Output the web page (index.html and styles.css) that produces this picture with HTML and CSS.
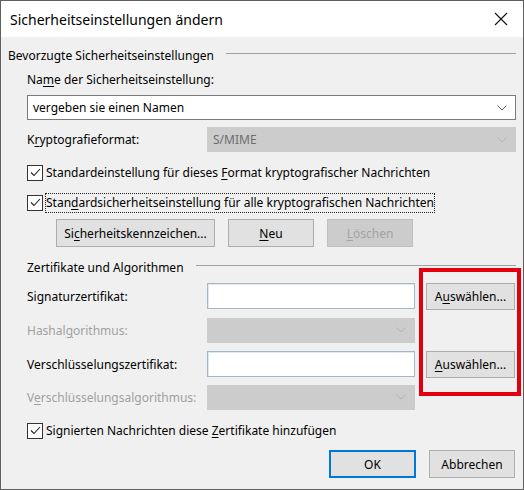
FILE: index.html
```html
<!DOCTYPE html>
<html lang="de">
<head>
    <meta charset="UTF-8">
    <title>Sicherheitseinstellungen ändern</title>
    <link rel="stylesheet" href="styles.css">
</head>
<body>

<div class="dialog">
    <div class="titlebar">
        <span class="title">Sicherheitseinstellungen ändern</span>
        <svg class="close" width="14" height="14" viewBox="0 0 14 14">
            <path d="M1 1 L13 13 M13 1 L1 13" stroke="#111" stroke-width="1.1" fill="none"/>
        </svg>
    </div>

    <div class="content">
        <!-- preferred settings -->
        <div class="group-head head-prefs">
            <span>Bevorzugte Sicherheitseinstellungen</span>
            <i class="rule"></i>
        </div>

        <div class="indent">
            <div class="field-label name-label">Na<u>m</u>e der Sicherheitseinstellung:</div>
            <div class="combo name-combo">
                <span>vergeben sie einen Namen</span>
                <svg class="chevron" width="10" height="6" viewBox="0 0 10 6"><path d="M0.5 0.5 L5 5 L9.5 0.5" stroke="#5c5c5c" fill="none"/></svg>
            </div>

            <div class="form-row format-row">
                <span class="row-label">K<u>r</u>yptografieformat:</span>
                <div class="combo disabled wide">
                    <span>S/MIME</span>
                    <svg class="chevron" width="10" height="6" viewBox="0 0 10 6"><path d="M0.5 0.5 L5 5 L9.5 0.5" stroke="#b4b4b4" fill="none"/></svg>
                </div>
            </div>

            <label class="check check-format">
                <span class="box"><svg width="13" height="13" viewBox="0 0 13 13"><path d="M2 6.5 L5 9.5 L11 3" stroke="#222" stroke-width="1.1" fill="none"/></svg></span>
                <span>Standardeinstellung für dieses <u>F</u>ormat kryptografischer Nachrichten</span>
            </label>

            <label class="check check-default">
                <span class="box"><svg width="13" height="13" viewBox="0 0 13 13"><path d="M2 6.5 L5 9.5 L11 3" stroke="#222" stroke-width="1.1" fill="none"/></svg></span>
                <span class="focused">Stan<u>d</u>ardsicherheitseinstellung für alle kryptografischen Nachrichten</span>
            </label>

            <div class="button-row">
                <button class="btn btn-labels">Si<u>c</u>herheitskennzeichen...</button>
                <button class="btn btn-new"><u>N</u>eu</button>
                <button class="btn btn-delete" disabled><u>L</u>öschen</button>
            </div>
        </div>

        <!-- certificates and algorithms -->
        <div class="group-head head-certs">
            <span>Zertifikate und Algorithmen</span>
            <i class="rule"></i>
        </div>

        <div class="indent">
            <div class="form-row cert-row sign-row">
                <span class="row-label">Signaturzertifikat:</span>
                <div class="textbox"></div>
                <button class="btn btn-pick">A<u>u</u>swählen...</button>
            </div>

            <div class="form-row cert-row hash-row">
                <span class="row-label muted">Hashal<u>g</u>orithmus:</span>
                <div class="combo disabled narrow">
                    <span></span>
                    <svg class="chevron" width="10" height="6" viewBox="0 0 10 6"><path d="M0.5 0.5 L5 5 L9.5 0.5" stroke="#b4b4b4" fill="none"/></svg>
                </div>
            </div>

            <div class="form-row cert-row crypt-row">
                <span class="row-label">Verschlüsselungszertifikat:</span>
                <div class="textbox"></div>
                <button class="btn btn-pick"><u>A</u>uswählen...</button>
            </div>

            <div class="form-row cert-row algo-row">
                <span class="row-label muted">V<u>e</u>rschlüsselungsalgorithmus:</span>
                <div class="combo disabled narrow">
                    <span></span>
                    <svg class="chevron" width="10" height="6" viewBox="0 0 10 6"><path d="M0.5 0.5 L5 5 L9.5 0.5" stroke="#b4b4b4" fill="none"/></svg>
                </div>
            </div>

            <label class="check check-attach">
                <span class="box"><svg width="13" height="13" viewBox="0 0 13 13"><path d="M2 6.5 L5 9.5 L11 3" stroke="#222" stroke-width="1.1" fill="none"/></svg></span>
                <span>Signierten Nachrichten diese <u>Z</u>ertifikate hinzufügen</span>
            </label>
        </div>

        <div class="footer">
            <button class="btn btn-ok">OK</button>
            <button class="btn btn-cancel">Abbrechen</button>
        </div>
    </div>

    <!-- red marker around the two pick buttons -->
    <div class="marker"></div>
</div>

</body>
</html>
```

FILE: styles.css
```css
* {
    box-sizing: border-box;
}
body {
    margin: 0;
    font-family: 'Noto Sans', 'Open Sans', sans-serif;
    font-size: 12px;
    color: #000;
}
.dialog {
    position: relative;
    width: 524px;
    height: 490px;
    border: 1px solid #5f5f5f;
    background-color: #f0f0f0;
    overflow: hidden;
}
.titlebar {
    height: 36px;
    background-color: #fff;
    display: flex;
    align-items: center;
    justify-content: space-between;
    padding: 0 15px 0 9px;
}
.title {
    font-size: 14px;
}
.close {
    display: block;
}
.content {
    padding: 0 7px 0 7px;
}
u {
    text-decoration-thickness: 1px;
    text-underline-offset: 2px;
}

/* group headers with the thin rule */
.group-head {
    display: flex;
    align-items: center;
    height: 16px;
    line-height: 16px;
}
.group-head .rule {
    flex: 1;
    height: 1px;
    background-color: #a0a0a0;
    margin: 0 0 6px 12px;
}
.head-prefs {
    margin-top: 11px;
}
.head-certs {
    margin-top: 13px;
    padding-left: 19px;
}
.indent {
    padding-left: 19px;
}

.field-label {
    height: 16px;
    line-height: 16px;
}
.name-label {
    margin-top: 8px;
}

/* combo boxes */
.combo {
    display: flex;
    align-items: center;
    justify-content: space-between;
    height: 25px;
    padding: 0 8px 0 5px;
    background-color: #fff;
    border: 1px solid #7a7a7a;
}
.combo.disabled {
    background-color: #cccccc;
    border-color: #cccccc;
    color: #6d6d6d;
}
.name-combo {
    margin-top: 7px;
}
.combo.wide {
    width: 309px;
}
.combo.narrow {
    width: 208px;
}

.form-row {
    display: flex;
    align-items: center;
}
.row-label {
    width: 180px;
    flex: none;
}
.row-label.muted {
    color: #a0a0a0;
}
.format-row {
    margin-top: 7px;
}

/* checkboxes */
.check {
    display: flex;
    align-items: center;
    height: 19px;
}
.check .box {
    width: 16px;
    height: 16px;
    border: 1px solid #333;
    background-color: #fff;
    display: flex;
    align-items: center;
    justify-content: center;
    margin-right: 3px;
    flex: none;
}
.check .box svg {
    display: block;
}
.check .focused {
    outline: 1px dotted #222;
    line-height: 18px;
}
.check-format {
    margin-top: 11px;
}
.check-default {
    margin-top: 11px;
}
.check-attach {
    margin-top: 11px;
}

/* buttons */
.btn {
    font-family: inherit;
    font-size: 12px;
    color: #000;
    background-color: #e1e1e1;
    border: 1px solid #adadad;
    padding: 0;
    height: 28px;
}
.btn:disabled {
    background-color: #cccccc;
    border-color: #bfbfbf;
    color: #a3a3a3;
}
.button-row {
    display: flex;
    gap: 13px;
    margin-top: 7px;
    padding-left: 29px;
}
.btn-labels {
    width: 159px;
}
.btn-new {
    width: 86px;
}
.btn-delete {
    width: 86px;
}

/* certificate rows */
.cert-row {
    height: 26px;
}
.sign-row {
    margin-top: 7px;
}
.hash-row,
.crypt-row {
    margin-top: 8px;
}
.algo-row {
    margin-top: 7px;
}
.textbox {
    width: 208px;
    height: 26px;
    background-color: #fff;
    border: 1px solid #a9b6c8;
    box-shadow: inset 1px 1px 0 #dfe9f6;
}
.cert-row .btn-pick {
    width: 89px;
    margin-left: 11px;
    height: 27px;
}
.cert-row .combo.narrow {
    height: 25px;
}

.footer {
    display: flex;
    justify-content: flex-end;
    gap: 13px;
    margin-top: 10px;
    padding-right: 1px;
}
.btn-ok {
    width: 87px;
    border: 2px solid #0078d7;
}
.btn-cancel {
    width: 86px;
}

.marker {
    position: absolute;
    left: 418px;
    top: 267px;
    width: 102px;
    height: 128px;
    border: 4px solid #e0000f;
}
```
